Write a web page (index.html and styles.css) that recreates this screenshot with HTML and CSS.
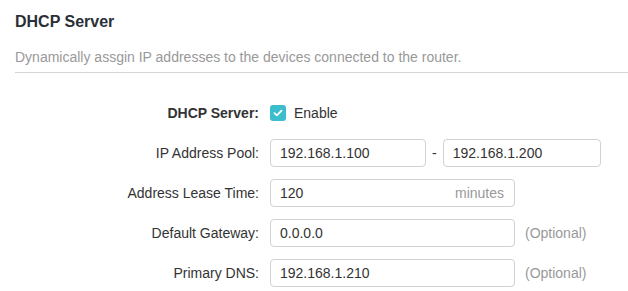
FILE: index.html
```html
<!DOCTYPE html>
<html lang="en">
<head>
    <meta charset="UTF-8">
    <meta name="viewport" content="width=device-width, initial-scale=1.0">
    <title>DHCP Server</title>
    <link rel="stylesheet" href="styles.css">
</head>
<body>
    <div class="section">
        <h2 class="section-title">DHCP Server</h2>
        <p class="section-desc">Dynamically assgin IP addresses to the devices connected to the router.</p>
    </div>

    <div class="form">
        <div class="row">
            <label class="label label-bold">DHCP Server:</label>
            <div class="control">
                <span class="checkbox">
                    <svg width="10" height="8" viewBox="0 0 10 8">
                        <path d="M1.5 4.2 L3.9 6.4 L8.5 1.6" fill="none" stroke="#fff" stroke-width="1.8" stroke-linecap="round" stroke-linejoin="round"/>
                    </svg>
                </span>
                <span class="check-text">Enable</span>
            </div>
        </div>

        <div class="row">
            <label class="label">IP Address Pool:</label>
            <div class="control">
                <div class="field field-short"><input type="text" value="192.168.1.100"></div>
                <span class="dash">-</span>
                <div class="field field-end"><input type="text" value="192.168.1.200"></div>
            </div>
        </div>

        <div class="row">
            <label class="label">Address Lease Time:</label>
            <div class="control">
                <div class="field field-wide">
                    <input type="text" value="120">
                    <span class="unit">minutes</span>
                </div>
            </div>
        </div>

        <div class="row">
            <label class="label">Default Gateway:</label>
            <div class="control">
                <div class="field field-wide"><input type="text" value="0.0.0.0"></div>
                <span class="hint">(Optional)</span>
            </div>
        </div>

        <div class="row">
            <label class="label">Primary DNS:</label>
            <div class="control">
                <div class="field field-wide"><input type="text" value="192.168.1.210"></div>
                <span class="hint">(Optional)</span>
            </div>
        </div>
    </div>
</body>
</html>
```

FILE: styles.css
```css
* {
    margin: 0;
    padding: 0;
    box-sizing: border-box;
}

body {
    font-family: "Liberation Sans", Arial, sans-serif;
    font-size: 14px;
    color: #333333;
    background-color: #ffffff;
    padding-left: 15px;
}

.section {
    padding-top: 12px;
    padding-bottom: 5px;
    border-bottom: 1px solid #d4d4d4;
}

.section-title {
    font-size: 16px;
    line-height: 20px;
    font-weight: bold;
    color: #2b3036;
}

.section-desc {
    margin-top: 15px;
    line-height: 20px;
    color: #999999;
}

.form {
    margin-top: 26px;
    display: flex;
    flex-direction: column;
    gap: 12px;
}

.row {
    display: flex;
    align-items: center;
    height: 28px;
}

.label {
    width: 244px;
    text-align: right;
    margin-right: 11px;
    color: #333333;
}

.label-bold {
    font-weight: bold;
}

.control {
    display: flex;
    align-items: center;
}

.checkbox {
    width: 16px;
    height: 16px;
    border-radius: 3px;
    background-color: #3cbdce;
    display: flex;
    align-items: center;
    justify-content: center;
}

.check-text {
    margin-left: 8px;
}

.field {
    height: 28px;
    border: 1px solid #d2d2d2;
    border-radius: 4px;
    display: flex;
    align-items: center;
    padding: 0 10px 0 9px;
    background-color: #ffffff;
}

.field input {
    border: none;
    outline: none;
    font-family: inherit;
    font-size: 14px;
    color: #333333;
    width: 100%;
    min-width: 0;
    background: transparent;
}

.field-short {
    width: 156px;
}

.field-end {
    width: 158px;
}

.field-wide {
    width: 245px;
}

.dash {
    margin: 0 6px;
}

.unit {
    color: #999999;
    flex-shrink: 0;
}

.hint {
    margin-left: 10px;
    color: #999999;
}
```
